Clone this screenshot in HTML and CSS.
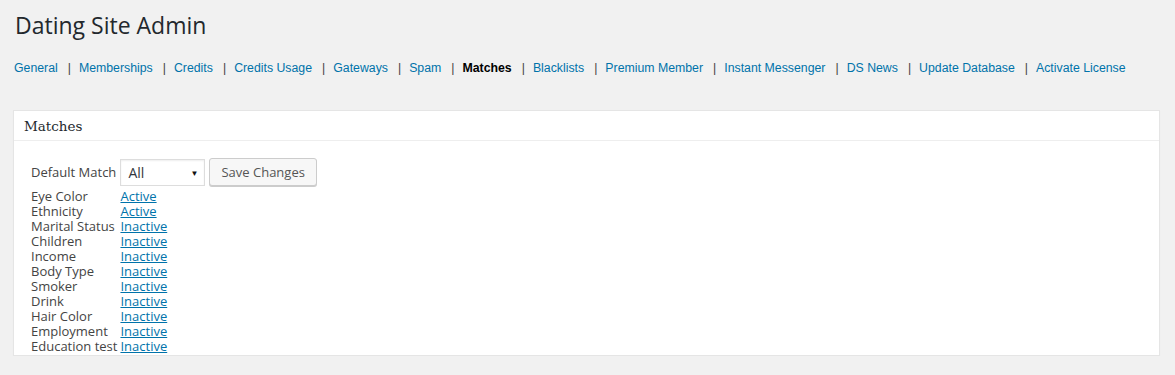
FILE: index.html
```html
<!DOCTYPE html>
<html lang="en">
<head>
    <meta charset="UTF-8">
    <title>Dating Site Admin</title>
    <link rel="stylesheet" href="styles.css">
</head>
<body>
    <div class="wrap">
        <h1>Dating Site Admin</h1>
        <div class="subnav">
            <a href="#">General</a><span class="sep">|</span>
            <a href="#">Memberships</a><span class="sep">|</span>
            <a href="#">Credits</a><span class="sep">|</span>
            <a href="#">Credits Usage</a><span class="sep">|</span>
            <a href="#">Gateways</a><span class="sep">|</span>
            <a href="#">Spam</a><span class="sep">|</span>
            <a href="#" class="current">Matches</a><span class="sep">|</span>
            <a href="#">Blacklists</a><span class="sep">|</span>
            <a href="#">Premium Member</a><span class="sep">|</span>
            <a href="#">Instant Messenger</a><span class="sep">|</span>
            <a href="#">DS News</a><span class="sep">|</span>
            <a href="#">Update Database</a><span class="sep">|</span>
            <a href="#">Activate License</a>
        </div>

        <div class="postbox">
            <h3 class="hndle">Matches</h3>
            <div class="inside">
                <form class="matches">
                    <label for="defmatch">Default Match</label>
                    <div class="controls">
                        <div class="select">
                            <select id="defmatch">
                                <option>All</option>
                                <option>Active</option>
                            </select>
                            <span class="arrow">&#9660;</span>
                        </div>
                        <button type="button" class="button">Save Changes</button>
                    </div>

                    <span>Eye Color</span><a href="#">Active</a>
                    <span>Ethnicity</span><a href="#">Active</a>
                    <span>Marital Status</span><a href="#">Inactive</a>
                    <span>Children</span><a href="#">Inactive</a>
                    <span>Income</span><a href="#">Inactive</a>
                    <span>Body Type</span><a href="#">Inactive</a>
                    <span>Smoker</span><a href="#">Inactive</a>
                    <span>Drink</span><a href="#">Inactive</a>
                    <span>Hair Color</span><a href="#">Inactive</a>
                    <span>Employment</span><a href="#">Inactive</a>
                    <span>Education test</span><a href="#">Inactive</a>
                </form>
            </div>
        </div>
    </div>
</body>
</html>
```

FILE: styles.css
```css
body {
    margin: 0;
    background: #f1f1f1;
    color: #444;
    font-family: "Open Sans", sans-serif;
    font-size: 13px;
}
.wrap {
    padding: 11px 15px 0 13px;
}
h1 {
    margin: 0 0 0 2px;
    font-size: 23px;
    font-weight: 400;
    line-height: 29px;
    color: #23282d;
}
.subnav {
    display: flex;
    margin: 19px 0 0 1px;
    font-family: "Liberation Sans", Arial, sans-serif;
    font-size: 12.3px;
    line-height: 18px;
    color: #444;
    white-space: nowrap;
}
.subnav a {
    color: #0073aa;
    text-decoration: none;
}
.subnav a.current {
    color: #000;
    font-weight: bold;
}
.sep {
    margin: 0 8px 0 10px;
}
.postbox {
    margin-top: 33px;
    background: #fff;
    border: 1px solid #e5e5e5;
    box-shadow: 0 1px 1px rgba(0, 0, 0, .04);
}
.hndle {
    margin: 0;
    padding: 0 10px;
    height: 29px;
    line-height: 31px;
    border-bottom: 1px solid #eee;
    font-family: "DejaVu Serif", Georgia, serif;
    font-size: 13.5px;
    font-weight: 400;
    color: #23282d;
}
.inside {
    padding: 17px 17px 1px 17px;
}
.matches {
    display: grid;
    grid-template-columns: auto 1fr;
    column-gap: 3px;
    line-height: 15px;
}
.matches > span, .matches > label {
    white-space: nowrap;
}
.matches > label {
    align-self: start;
    padding-top: 7px;
}
.matches a {
    color: #0073aa;
    justify-self: start;
}
.controls {
    display: flex;
    align-items: flex-start;
    gap: 4px;
    height: 31px;
}
.select {
    position: relative;
    margin-top: 1px;
}
select {
    appearance: none;
    width: 85px;
    height: 27px;
    margin: 0;
    padding: 0 0 0 7px;
    border: 1px solid #ddd;
    box-shadow: inset 0 1px 2px rgba(0, 0, 0, .07);
    background: #fff;
    font-family: "Open Sans", sans-serif;
    font-size: 14px;
    color: #32373c;
    display: block;
}
.arrow {
    position: absolute;
    right: 7px;
    top: 9px;
    font-size: 8px;
    line-height: 10px;
    color: #111;
    pointer-events: none;
}
.button {
    height: 28px;
    padding: 0 11px;
    border: 1px solid #ccc;
    border-radius: 3px;
    background: #f7f7f7;
    box-shadow: 0 1px 0 #ccc;
    font-family: "Open Sans", sans-serif;
    font-size: 13px;
    line-height: 26px;
    color: #555;
}
```
